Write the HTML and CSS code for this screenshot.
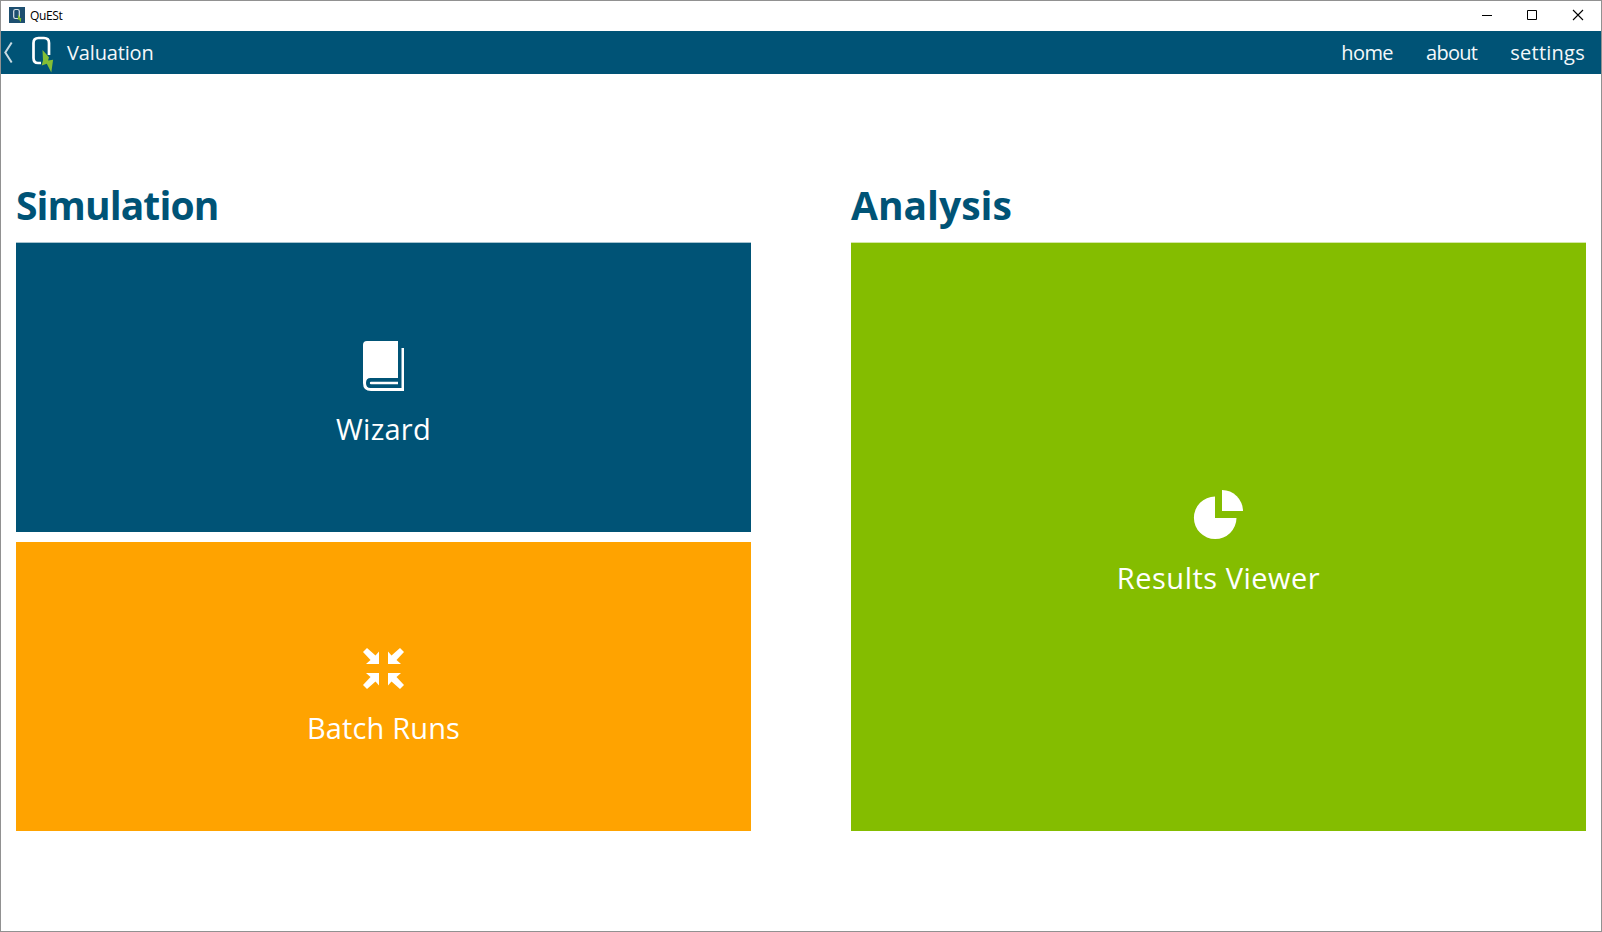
FILE: index.html
```html
<!DOCTYPE html>
<html lang="en">
<head>
<meta charset="utf-8">
<title>QuESt</title>
<link rel="stylesheet" href="styles.css">
</head>
<body>
<div class="window">
  <header class="titlebar">
    <svg class="app-icon" width="16" height="16" viewBox="0 0 16 16">
      <rect width="16" height="16" fill="#1d4f70"/>
      <rect x="4.7" y="2.500" width="5.600" height="9" rx="1.800" fill="none" stroke="#dce5ea" stroke-width="1.200"/>
      <path d="M8.800 7.500l2.200 2.700-.5.8h1.700l-.4 4.200-1.800-2.800-1.700.4.800-1.600z" fill="#7fbf2a"/>
    </svg>
    <span class="app-name">QuESt</span>
    <svg class="controls" width="102" height="12" viewBox="0 0 102 12" fill="none" stroke="#000">
      <path d="M0 6.500h10M45.500 1.500h9v9h-9z"/>
      <path d="M91 1l10 10M101 1L91 11" stroke-width="1.100"/>
    </svg>
  </header>
  <nav class="navbar">
    <svg class="brand" width="56" height="43" viewBox="0 0 56 43">
      <path d="M10.700 11.500L4.300 21.500l6.400 10" fill="none" stroke="#c9dbe3" stroke-width="2"/>
      <path d="M40 32H37q-4.500 0-4.500-5V12q0-5 5-5h5.500q5 0 5 5v12" fill="none" stroke="#fff" stroke-width="2.700"/>
      <path d="M41.500 19l6.500 7.300-.9 3.200 5-.7L50.300 41.500l-4.500-8.800-5.100 1.800 1.300-5z" fill="#84bf35"/>
    </svg>
    <span class="page-name">Valuation</span>
    <div class="links">
      <a class="link-home">home</a>
      <a class="link-about">about</a>
      <a class="link-settings">settings</a>
    </div>
  </nav>
  <main class="content">
    <section class="column">
      <h1 class="heading heading-simulation">Simulation</h1>
      <div class="cards">
        <div class="card card-blue card-edge">
          <svg width="65" height="64" viewBox="-1 0 65 64" fill="#fff">
            <path fill-rule="evenodd" d="M15 8H46v37H18.500q-4.500 0-4.500 5t4.500 5H49.500V15H52v43H19q-8 0-8-8V12q0-4 4-4z"/>
            <path d="M19 48.800h27v2.500H19q-1.200 0-1.200-1.250t1.200-1.250z"/>
          </svg>
          <span class="label label-wizard">Wizard</span>
        </div>
        <div class="card card-orange">
          <svg width="65" height="64" viewBox="-1 0 65 64" fill="#fff">
            <g id="arrow"><path d="M11 20l4-4 8.500 7.500 3.500-4V32H14l4.500-4z"/></g>
            <use href="#arrow" transform="matrix(-1 0 0 1 63 0)"/>
            <use href="#arrow" transform="matrix(1 0 0 -1 0 73)"/>
            <use href="#arrow" transform="matrix(-1 0 0 -1 63 73)"/>
          </svg>
          <span class="label label-batch">Batch Runs</span>
        </div>
      </div>
    </section>
    <section class="column">
      <h1 class="heading heading-analysis">Analysis</h1>
      <div class="cards">
        <div class="card card-green card-edge">
          <svg width="65" height="64" viewBox="0 0 65 64" fill="#fff">
            <path d="M29 13.500V35H50.500A21.300 21.300 0 1 1 29 13.500z"/>
            <path d="M36 7A21 21 0 0 1 57 28H36z"/>
          </svg>
          <span class="label label-results">Results Viewer</span>
        </div>
      </div>
    </section>
  </main>
</div>
</body>
</html>
```
FILE: styles.css
```css
* { box-sizing: border-box; }
body { margin: 0; font-family: "Open Sans", "Noto Sans", sans-serif; }
.window { height: 932px; display: flex; flex-direction: column; border: 1px solid #919191; background: #fff; }
.titlebar { height: 30px; display: flex; align-items: center; padding: 0 17px 2px 8px; }
.app-name { margin: 2px 0 0 5px; font-size: 12px; line-height: 16px; letter-spacing: -0.35px; color: #000; }
.controls { margin-left: auto; }
.navbar { height: 43px; display: flex; align-items: center; padding-right: 16px; background: #005376; color: #f4f8fa; font-size: 20px; line-height: 28px; }
.brand { margin-right: 10px; }
.page-name { letter-spacing: -0.15px; }
.links { display: flex; margin-left: auto; gap: 33px; }
.link-home { letter-spacing: -0.6px; }
.link-about { letter-spacing: -0.7px; }
.link-settings { letter-spacing: 0.25px; }
.content { display: flex; gap: 100px; padding: 105px 15px 0; }
.column { flex: 1; }
.heading { margin: 0; height: 63px; font-size: 39px; line-height: 51px; font-weight: 700; color: #005376; white-space: nowrap; }
.heading-simulation { letter-spacing: -0.9px; }
.cards { height: 589px; display: flex; flex-direction: column; gap: 10px; }
.card { flex: 1; display: flex; flex-direction: column; align-items: center; justify-content: center; color: #fff; }
.card-blue { background: #005376; }
.card-orange { background: #ffa300; }
.card-green { background: #84bd00; }
.card-edge { box-shadow: inset 0 1px rgba(255, 255, 255, 0.65); }
.label { margin: 11px 0 -8px; font-size: 29px; line-height: 41px; white-space: nowrap; }
.label-wizard { letter-spacing: 0.25px; }
.label-batch { letter-spacing: 0.15px; }
.label-results { margin: 10px 0 -7px; letter-spacing: 0.5px; }
```
